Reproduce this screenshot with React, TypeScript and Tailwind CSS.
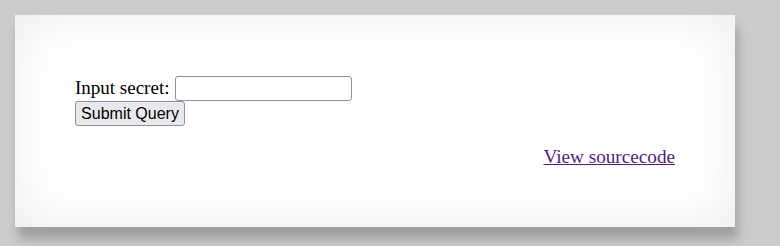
export default function App() {
  return (
    <div className="min-h-[246px] bg-[#cccccc] p-[15px] font-['Liberation_Serif',serif]">
      <div className="w-[720px] bg-white px-[60px] pt-[60px] pb-[60px] shadow-[inset_0_0_50px_rgba(0,0,0,0.08),3px_12px_10px_rgba(0,0,0,0.22)]">
        <form onSubmit={(e) => e.preventDefault()}>
          <div className="flex h-[26px] items-center text-[19px] leading-[26px] text-black">
            <label htmlFor="secret" className="mr-[6px]">
              Input secret:
            </label>
            <input
              id="secret"
              type="text"
              className="h-[25px] w-[177px] rounded-[3px] border border-[#8f8f9d] bg-white"
            />
          </div>
          <button
            type="submit"
            className="block h-[25px] w-[110px] rounded-[3px] border border-[#8f8f9d] bg-[#e9e9ed] font-['Liberation_Sans',sans-serif] text-[16px] leading-none text-black"
          >
            Submit Query
          </button>
        </form>
        <div className="mt-[20px] h-[21px] text-right text-[19.2px] leading-[21px]">
          <a href="#" className="text-[#551a8b] underline">
            View sourcecode
          </a>
        </div>
      </div>
    </div>
  );
}
